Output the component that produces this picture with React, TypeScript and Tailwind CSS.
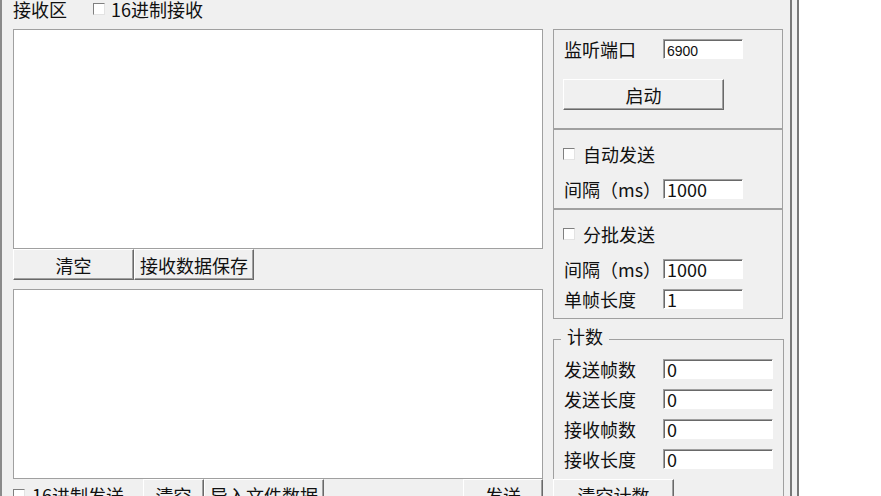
import type { ReactNode } from "react";

function Check() {
  return (
    <span className="block h-[12px] w-[12px] shrink-0 border border-t-[#808080] border-l-[#808080] border-r-[#e3e3e3] border-b-[#e3e3e3] bg-white" />
  );
}

function Btn({ label, className = "" }: { label: string; className?: string }) {
  return (
    <div
      className={`flex h-[31px] shrink-0 items-center justify-center border border-t-white border-l-white border-r-[#696969] border-b-[#696969] bg-[#f0f0f0] shadow-[inset_-1px_-1px_0_#a0a0a0] ${className}`}
    >
      {label}
    </div>
  );
}

function Field({
  value,
  small,
  className = "",
}: {
  value: string;
  small?: boolean;
  className?: string;
}) {
  const font = small
    ? "items-end font-['Liberation_Sans',sans-serif] text-[14px]"
    : "items-center";
  return (
    <div
      className={`flex h-[20px] shrink-0 border border-t-[#a0a0a0] border-l-[#a0a0a0] border-r-white border-b-white bg-white pl-[3px] shadow-[inset_1px_1px_0_#696969] ${font} ${className}`}
    >
      {value}
    </div>
  );
}

function Row({
  label,
  children,
  className = "",
}: {
  label: string;
  children: ReactNode;
  className?: string;
}) {
  return (
    <div className={`flex h-[20px] shrink-0 items-center ${className}`}>
      <span className="w-[99px] shrink-0 whitespace-nowrap">{label}</span>
      {children}
    </div>
  );
}

function CheckRow({ label }: { label: string }) {
  return (
    <div className="flex h-[20px] shrink-0 items-center">
      <span className="ml-[-1px]">
        <Check />
      </span>
      <span className="ml-[8px]">{label}</span>
    </div>
  );
}

const COUNTS = ["发送帧数", "发送长度", "接收帧数", "接收长度"];

export default function App() {
  return (
    <div className="flex h-[496px] w-[881px] items-start overflow-hidden bg-[#f0f0f0] font-['Noto_Sans_CJK_SC',sans-serif] text-[18px] leading-none text-[#111]">
      <div className="h-full w-[2px] shrink-0 bg-[#8a8a8a]" />

      {/* left column: receive / send */}
      <div className="ml-[11px] flex w-[530px] shrink-0 flex-col">
        <div className="flex h-[17px] shrink-0 items-center">
          <span className="w-[80px] shrink-0">接收区</span>
          <Check />
          <span className="ml-[6px]">16进制接收</span>
        </div>
        <div className="mt-[12px] h-[220px] shrink-0 border border-[#a0a0a0] bg-white" />
        <div className="flex shrink-0">
          <Btn label="清空" className="w-[121px]" />
          <Btn label="接收数据保存" className="w-[120px]" />
        </div>
        <div className="mt-[9px] h-[190px] shrink-0 border border-[#a0a0a0] bg-white" />
        <div className="flex shrink-0">
          <div className="flex h-[31px] w-[130px] shrink-0 items-center">
            <Check />
            <span className="ml-[7px]">16进制发送</span>
          </div>
          <Btn label="清空" className="w-[61px]" />
          <Btn label="导入文件数据" className="w-[120px]" />
          <div className="w-[139px] shrink-0" />
          <Btn label="发送" className="w-[80px]" />
        </div>
      </div>

      {/* right column: settings */}
      <div className="ml-[10px] flex w-[230px] shrink-0 flex-col pt-[29px]">
        <div className="h-[100px] shrink-0 border border-[#a0a0a0] pl-[10px] pt-[9px]">
          <Row label="监听端口">
            <Field small value="6900" className="w-[80px]" />
          </Row>
          <Btn label="启动" className="ml-[-1px] mt-[20px] w-[161px]" />
        </div>

        <div className="h-[80px] shrink-0 border border-[#a0a0a0] pl-[10px] pt-[14px]">
          <CheckRow label="自动发送" />
          <Row label="间隔（ms）" className="mt-[15px]">
            <Field value="1000" className="w-[80px]" />
          </Row>
        </div>

        <div className="h-[110px] shrink-0 border border-[#a0a0a0] pl-[10px] pt-[14px]">
          <CheckRow label="分批发送" />
          <Row label="间隔（ms）" className="mt-[15px]">
            <Field value="1000" className="w-[80px]" />
          </Row>
          <Row label="单帧长度" className="mt-[10px]">
            <Field value="1" className="w-[80px]" />
          </Row>
        </div>

        <fieldset className="mt-[10px] h-[190px] shrink-0 border border-[#a0a0a0] px-[10px]">
          <legend className="ml-[-3px] px-[6px] leading-[20px]">
            <span className="relative -top-[3px]">计数</span>
          </legend>
          <div className="mt-[10px] flex flex-col gap-[10px]">
            {COUNTS.map((c) => (
              <Row key={c} label={c}>
                <Field value="0" className="w-[110px]" />
              </Row>
            ))}
          </div>
          <Btn label="清空计数" className="ml-[-11px] mt-[10px] w-[121px]" />
        </fieldset>
      </div>

      <div className="ml-[7px] h-full w-[2px] shrink-0 bg-[#787878]" />
      <div className="ml-[5px] h-full w-[2px] shrink-0 bg-[#787878]" />
      <div className="h-full flex-1 bg-white" />
    </div>
  );
}
